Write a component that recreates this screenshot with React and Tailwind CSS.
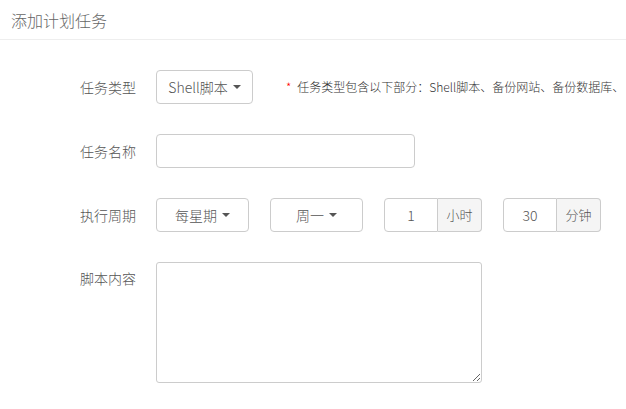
import { useState } from 'react';

const font = { fontFamily: '"Noto Sans CJK SC", "Noto Sans", sans-serif' };

function Caret() {
  return (
    <span className="ml-[5px] inline-block h-0 w-0 border-x-[4px] border-t-[4px] border-x-transparent border-t-[#555]" />
  );
}

function Row({ label, top = false, children }) {
  return (
    <div className={`flex ${top ? 'items-start' : 'items-center'}`}>
      <label className={`w-[136px] shrink-0 text-right text-[14px] text-[#555] ${top ? 'pt-[6px]' : ''}`}>
        {label}
      </label>
      <div className="ml-[20px] flex items-center">{children}</div>
    </div>
  );
}

function DropBtn({ text, width }) {
  return (
    <button
      className={`flex h-[34px] ${width} items-center justify-center rounded-[4px] border border-[#ccc] bg-white text-[14px] text-[#555]`}
    >
      {text}
      <Caret />
    </button>
  );
}

function AddonInput({ value, unit }) {
  return (
    <div className="flex h-[34px] items-stretch">
      <input
        defaultValue={value}
        className="w-[54px] rounded-l-[4px] border border-[#ccc] text-center text-[14px] text-[#555] outline-none"
      />
      <span className="flex w-[44px] items-center justify-center rounded-r-[4px] border border-l-0 border-[#ccc] bg-[#f5f5f5] text-[13px] text-[#555]">
        {unit}
      </span>
    </div>
  );
}

export default function App() {
  const [name, setName] = useState('');

  return (
    <div className="h-[409px] w-[626px] overflow-hidden bg-white font-light" style={font}>
      <div className="flex h-[40px] items-center border-b border-[#eee] pl-[11px] text-[16px] text-[#666]">
        添加计划任务
      </div>

      <div className="flex flex-col gap-[30px] pt-[30px]">
        <Row label="任务类型">
          <DropBtn text="Shell脚本" width="w-[97px]" />
          <span className="ml-[33px] whitespace-nowrap text-[12px] text-[#333]">
            <span className="mr-[6px] text-[#f00]">*</span>
            任务类型包含以下部分：Shell脚本、备份网站、备份数据库、
          </span>
        </Row>

        <Row label="任务名称">
          <input
            value={name}
            onChange={(e) => setName(e.target.value)}
            className="h-[34px] w-[259px] rounded-[4px] border border-[#ccc] px-[10px] text-[14px] outline-none"
          />
        </Row>

        <Row label="执行周期">
          <DropBtn text="每星期" width="w-[93px]" />
          <div className="ml-[21px]">
            <DropBtn text="周一" width="w-[93px]" />
          </div>
          <div className="ml-[21px]">
            <AddonInput value="1" unit="小时" />
          </div>
          <div className="ml-[21px]">
            <AddonInput value="30" unit="分钟" />
          </div>
        </Row>

        <Row label="脚本内容" top>
          <textarea className="h-[121px] w-[326px] rounded-[3px] border border-[#ccc] p-[6px] text-[14px] outline-none" />
        </Row>
      </div>
    </div>
  );
}
